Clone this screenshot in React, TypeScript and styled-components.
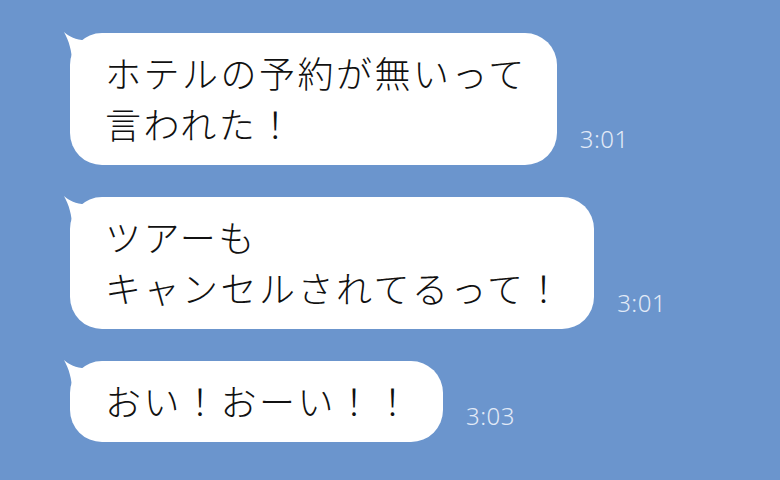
import React from 'react'
import styled, { createGlobalStyle } from 'styled-components'

const GlobalStyle = createGlobalStyle`
  html, body {
    margin: 0;
    padding: 0;
    background: #6b95cd;
  }
  body {
    width: 780px;
    height: 480px;
    overflow: hidden;
    font-family: "Noto Sans CJK JP", "Noto Sans", sans-serif;
  }
`

const Screen = styled.div`
  display: flex;
  flex-direction: column;
  gap: 32px;
  padding: 33px 0 0 70px;
`

const Row = styled.div`
  display: flex;
  align-items: flex-end;
  gap: 23px;
`

const Bubble = styled.div`
  position: relative;
  background: #ffffff;
  border-radius: 32px;
  padding: 14px 30px 16px 35px;
  color: #111;
  font-size: 36px;
  font-weight: 300;
  line-height: 51px;
  letter-spacing: 2.5px;
  white-space: pre;
`

const Tail = styled.svg`
  position: absolute;
  left: -7px;
  top: -2px;
  width: 30px;
  height: 32px;
`

const Time = styled.span`
  margin-bottom: 10px;
  font-family: "Noto Sans", "Liberation Sans", sans-serif;
  font-size: 24px;
  font-weight: 300;
  color: #e2eaf7;
  letter-spacing: 0.5px;
`

const messages = [
  { text: 'ホテルの予約が無いって\n言われた！', time: '3:01' },
  { text: 'ツアーも\nキャンセルされてるって！', time: '3:01' },
  { text: 'おい！おーい！！', time: '3:03' },
]

export default function App() {
  return (
    <>
      <GlobalStyle />
      <Screen>
        {messages.map((m, i) => (
          <Row key={i}>
            <Bubble>
              <Tail viewBox="0 0 30 32">
                <path d="M1 1 C7 6 14 10 26 9 L26 32 L9 32 C9 20 6 10 1 1 Z" fill="#fff" />
              </Tail>
              {m.text}
            </Bubble>
            <Time>{m.time}</Time>
          </Row>
        ))}
      </Screen>
    </>
  )
}
